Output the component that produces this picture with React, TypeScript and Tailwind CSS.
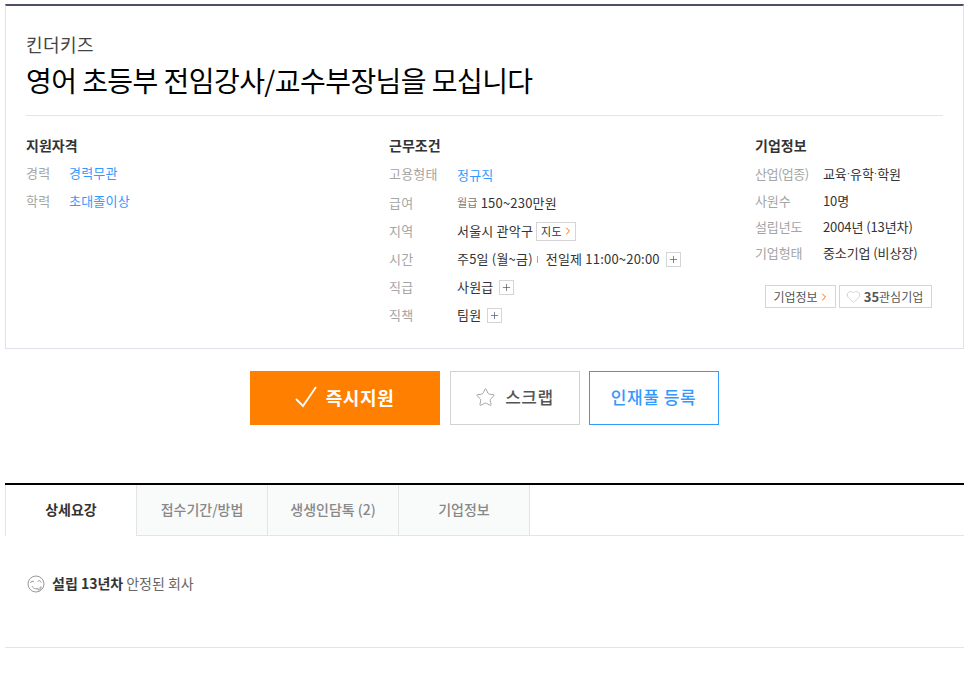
import { Star, Heart, ChevronRight, Plus } from "lucide-react";

const FONT = "font-['Noto_Sans_CJK_KR','Noto_Sans',sans-serif]";

const Row = ({ label, w, h, children }: { label: string; w: string; h: string; children: React.ReactNode }) => (
  <div className={`flex items-center ${h}`}>
    <span className={`${w} shrink-0 text-[#a5a5a5]`}>{label}</span>
    <div className="flex items-center text-[#333]">{children}</div>
  </div>
);

const PlusBox = () => (
  <span className="ml-[6px] flex h-[15px] w-[15px] items-center justify-center border border-[#d5d5d5] text-[#4b5068]">
    <Plus size={11} strokeWidth={1.5} />
  </span>
);

const Dot = () => <span className="font-['Liberation_Sans'] text-[10px] tracking-normal">·</span>;

const Tab = ({ label, w }: { label: string; w: string }) => (
  <div className={`flex h-[51px] items-center justify-center border-r border-b border-[#e4e4e4] bg-[#f9fafa] pb-[2px] font-medium text-[#888] ${w}`}>
    {label}
  </div>
);

export default function App() {
  return (
    <div className={`${FONT} min-h-[673px] bg-white px-[5px] pt-1 text-[13px] tracking-[0.2px] text-[#333]`}>
      <section className="h-[345px] border border-t-2 border-[#dfe1ec] border-t-[#4b5068] px-5 pt-[25px]">
        <div className="text-[18px] leading-[26px] tracking-[0.4px] text-[#444]">킨더키즈</div>
        <h1 className="mt-[3px] border-b border-[#e4e5ea] pb-[15px] text-[28px] leading-[40px] font-normal tracking-[-0.55px] text-black">
          영어 초등부 전임강사/교수부장님을 모십니다
        </h1>

        <div className="mt-[19px] flex">
          <div className="w-[363px]">
            <h2 className="text-[14px] leading-[20px] font-bold tracking-normal">지원자격</h2>
            <div className="mt-[4px]">
              <Row label="경력" w="w-[43px]" h="h-[28px]">
                <span className="text-[#3399ff]">경력무관</span>
              </Row>
              <Row label="학력" w="w-[43px]" h="h-[28px]">
                <span className="text-[#3399ff]">초대졸이상</span>
              </Row>
            </div>
          </div>

          <div className="w-[366px]">
            <h2 className="text-[14px] leading-[20px] font-bold tracking-normal">근무조건</h2>
            <div className="mt-[4px]">
              <Row label="고용형태" w="w-[68px]" h="h-[29px]">
                <span className="translate-y-px text-[#3399ff]">정규직</span>
              </Row>
              <Row label="급여" w="w-[68px]" h="h-[29px]">
                <span className="mr-[3px] text-[11px] text-[#777]">월급</span> 150~230만원
              </Row>
              <Row label="지역" w="w-[68px]" h="h-[28px]">
                서울시 관악구
                <span className="ml-[3px] flex h-[19px] items-center border border-[#d5d5d5] pl-[4px] pr-[1px] text-[11px]">
                  지도
                  <ChevronRight size={12} strokeWidth={2} className="text-[#f60]" />
                </span>
              </Row>
              <Row label="시간" w="w-[68px]" h="h-[28px]">
                주5일 (월~금)
                <span className="ml-[4px] mr-[8px] h-[7px] w-px bg-[#aaa]" />
                전일제 11:00~20:00
                <PlusBox />
              </Row>
              <Row label="직급" w="w-[68px]" h="h-[28px]">
                사원급
                <PlusBox />
              </Row>
              <Row label="직책" w="w-[68px]" h="h-[28px]">
                팀원
                <PlusBox />
              </Row>
            </div>
          </div>

          <div className="flex-1">
            <h2 className="text-[14px] leading-[20px] font-bold tracking-normal">기업정보</h2>
            <div className="mt-[4px] tracking-[-0.1px]">
              <Row label="산업(업종)" w="w-[68px] tracking-[-0.5px]" h="h-[29px]">
                교육<Dot />유학<Dot />학원
              </Row>
              <Row label="사원수" w="w-[68px]" h="h-[26px]">10명</Row>
              <Row label="설립년도" w="w-[68px]" h="h-[26px]">2004년 (13년차)</Row>
              <Row label="기업형태" w="w-[68px]" h="h-[26px]">중소기업 (비상장)</Row>
            </div>
            <div className="ml-[10px] mt-[19px] flex gap-[3px] text-[12px] tracking-normal text-[#555]">
              <span className="flex h-[23px] w-[71px] items-center justify-center border border-[#d5d5d5] pl-[2px]">
                기업정보
                <ChevronRight size={12} strokeWidth={2} className="text-[#f60]" />
              </span>
              <span className="flex h-[23px] w-[93px] items-center justify-center border border-[#d5d5d5] pr-[2px]">
                <Heart size={15} strokeWidth={1} className="mr-[3px] text-[#bbb]" />
                <b className="text-[13px]">35</b>관심기업
              </span>
            </div>
          </div>
        </div>
      </section>

      <div className="mt-[22px] flex justify-center pr-[1px] text-[17px] font-bold tracking-[0.6px]">
        <button className="flex h-[54px] w-[190px] items-center justify-center gap-[9px] bg-[#ff8000] pb-[2px] text-[18px] tracking-[0.6px] text-white">
          <svg width="22" height="22" viewBox="0 0 22 22" fill="none" stroke="currentColor" strokeWidth="1.8">
            <path d="M1 13l7 7L21 1" />
          </svg>
          즉시지원
        </button>
        <button className="ml-[10px] flex h-[54px] w-[130px] items-center justify-center gap-[9px] border border-[#d2d2d2] pb-[2px] font-medium text-[#555]">
          <Star size={21} strokeWidth={1} className="text-[#999]" />
          스크랩
        </button>
        <button className="ml-[9px] flex h-[54px] w-[130px] items-center justify-center border border-[#3399ff] pb-[2px] font-medium text-[#3399ff]">
          인재풀 등록
        </button>
      </div>

      <nav className="mt-[58px] flex border-t-2 border-black text-[14px] tracking-normal">
        <div className="flex h-[51px] w-[132px] items-center justify-center border-x border-[#e4e4e4] pb-[2px] font-bold">상세요강</div>
        <Tab label="접수기간/방법" w="w-[131px]" />
        <Tab label="생생인담톡 (2)" w="w-[131px]" />
        <Tab label="기업정보" w="w-[131px]" />
        <div className="flex-1 border-b border-[#e4e4e4]" />
      </nav>

      <div className="flex h-[112px] items-start border-b border-[#e4e4e4] pl-[22px] pt-[37px] text-[14px] tracking-normal">
        <svg width="18" height="18" viewBox="0 0 18 18" fill="none" stroke="#999" className="mr-[7px] mt-[2px]">
          <circle cx="9" cy="9" r="8" />
          <path d="M3.5 8a2 2 0 0 1 3.5-1M10.5 6.5a2 2 0 0 1 3.5 1M5 11c1 3 6 4 9 1" />
          <path d="M10.5 14c1 2 4 1 3.5-2.5" fill="#ddd" />
        </svg>
        <b className="text-[#333]">설립 13년차</b>
        <span className="ml-[3px] text-[#666]">안정된 회사</span>
      </div>
    </div>
  );
}
